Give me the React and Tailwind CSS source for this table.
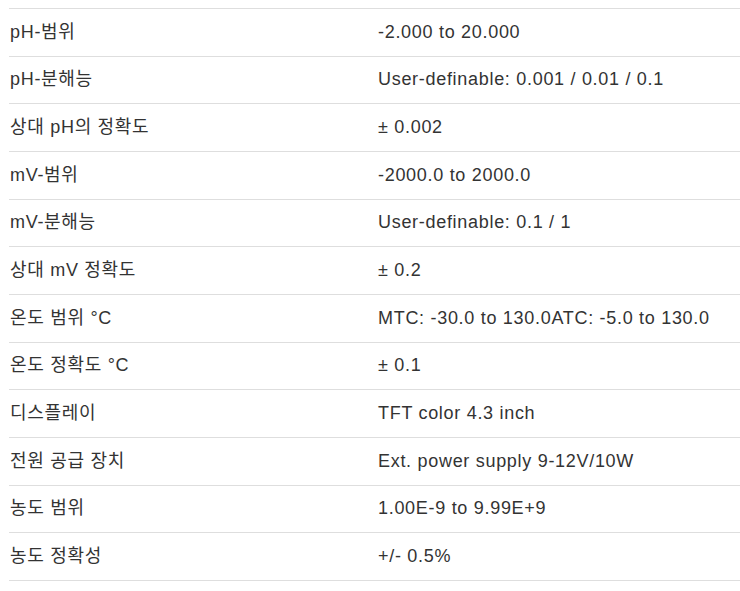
const specs = [
  ['pH-범위', '-2.000 to 20.000'],
  ['pH-분해능', 'User-definable: 0.001 / 0.01 / 0.1'],
  ['상대 pH의 정확도', '± 0.002'],
  ['mV-범위', '-2000.0 to 2000.0'],
  ['mV-분해능', 'User-definable: 0.1 / 1'],
  ['상대 mV 정확도', '± 0.2'],
  ['온도 범위 °C', 'MTC: -30.0 to 130.0ATC: -5.0 to 130.0'],
  ['온도 정확도 °C', '± 0.1'],
  ['디스플레이', 'TFT color 4.3 inch'],
  ['전원 공급 장치', 'Ext. power supply 9-12V/10W'],
  ['농도 범위', '1.00E-9 to 9.99E+9'],
  ['농도 정확성', '+/- 0.5%'],
];

export default function App() {
  return (
    <div className="min-h-[591px] bg-white pt-[8px] pl-[9px] font-['Liberation_Sans','Noto_Sans_CJK_KR',sans-serif] text-[18px] tracking-[0.7px] text-[#333]">
      <div className="border-t border-[#dedede]">
        {specs.map(([label, value]) => (
          <div key={label} className="grid h-[47.67px] grid-cols-[369px_1fr] items-center border-b border-[#dedede]">
            <div className="pl-px">{label}</div>
            <div>{value}</div>
          </div>
        ))}
      </div>
    </div>
  );
}
